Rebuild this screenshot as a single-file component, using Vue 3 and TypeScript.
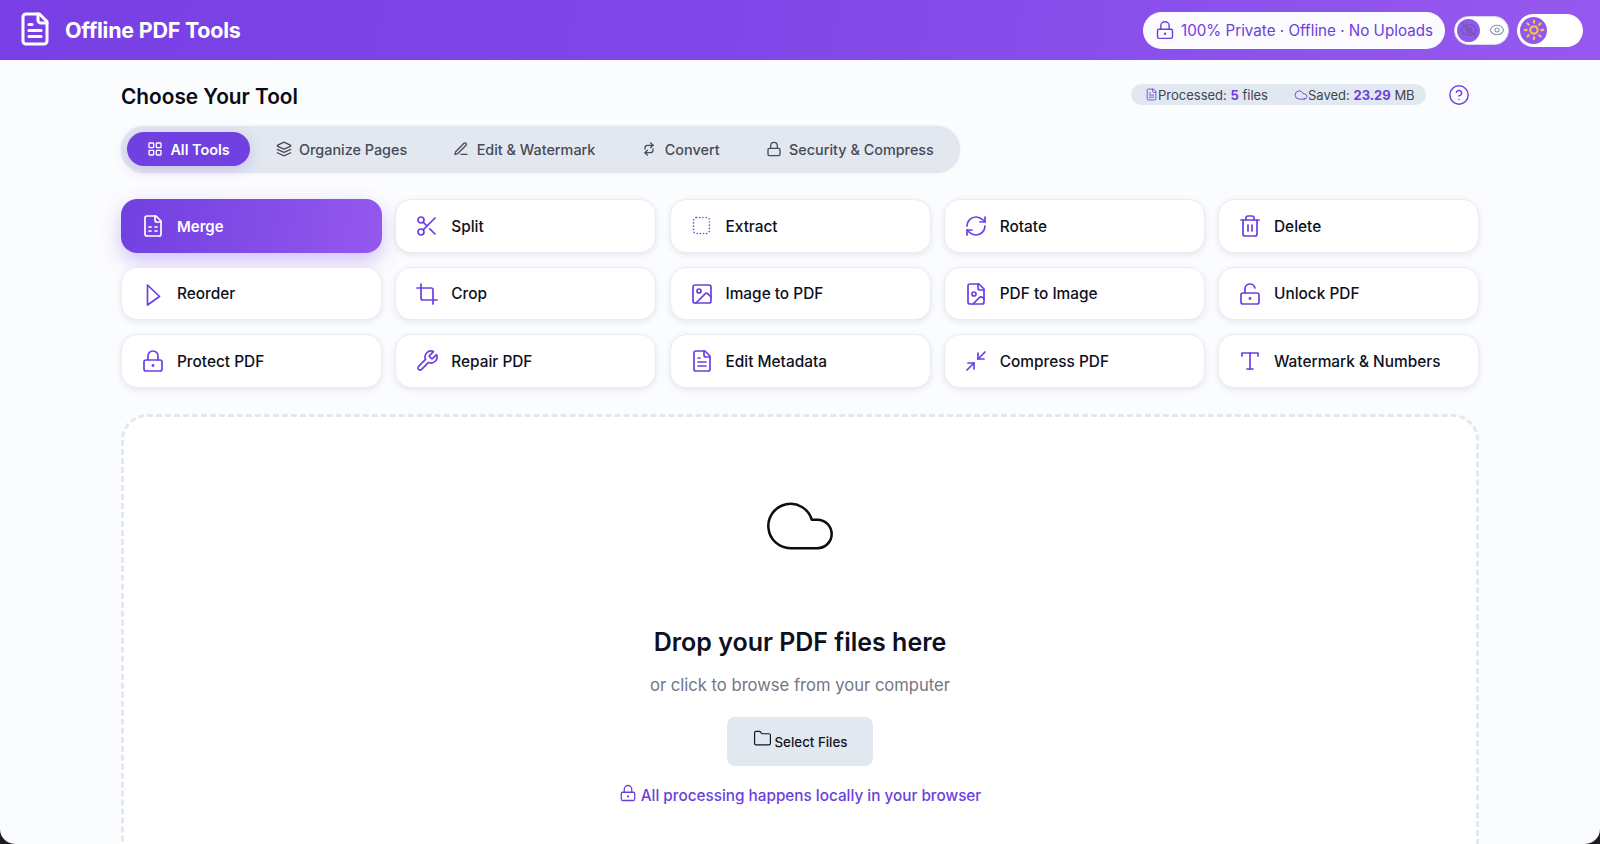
<script setup lang="ts">
import { h } from "vue";

const lockDot =
  '<rect x="3" y="11" width="18" height="11" rx="2"/><path d="M7 11V7a5 5 0 0 1 10 0v4"/><circle cx="12" cy="16.5" r=".6"/>';
const fileBase =
  '<path d="M15 2H6a2 2 0 0 0-2 2v16a2 2 0 0 0 2 2h12a2 2 0 0 0 2-2V7Z"/><path d="M14 2v4a2 2 0 0 0 2 2h4"/>';

const icons: Record<string, string> = {
  fileText: fileBase + '<path d="M10 9H8"/><path d="M16 13H8"/><path d="M16 17H8"/>',
  fileList: fileBase + '<path d="M8 13h2"/><path d="M14 13h2"/><path d="M8 17h2"/><path d="M14 17h2"/>',
  fileImage: fileBase + '<circle cx="10" cy="12" r="2"/><path d="m20 17-1.296-1.296a2.41 2.41 0 0 0-3.408 0L9 22"/>',
  scissors:
    '<circle cx="6" cy="6" r="3"/><circle cx="6" cy="18" r="3"/><path d="M8.12 8.12 12 12"/><path d="M20 4 8.12 15.88"/><path d="M14.8 14.8 20 20"/>',
  dotted: '<rect x="3.5" y="3.5" width="16" height="16" rx="3" stroke-width="1.6" stroke-dasharray="0.01 3.2"/>',
  rotate:
    '<path d="M3 12a9 9 0 0 1 9-9 9.75 9.75 0 0 1 6.74 2.74L21 8"/><path d="M21 3v5h-5"/><path d="M21 12a9 9 0 0 1-9 9 9.75 9.75 0 0 1-6.74-2.74L3 16"/><path d="M8 16H3v5"/>',
  trash:
    '<path d="M3 6h18"/><path d="M19 6v14a2 2 0 0 1-2 2H7a2 2 0 0 1-2-2V6"/><path d="M8 6V4a2 2 0 0 1 2-2h4a2 2 0 0 1 2 2v2"/><path d="M10 11v6"/><path d="M14 11v6"/>',
  reorder: '<path d="M6.5 23V3L18.5 14.5 6.5 23"/>',
  crop: '<path d="M6 2v14a2 2 0 0 0 2 2h14"/><path d="M18 22V8a2 2 0 0 0-2-2H2"/>',
  image:
    '<rect x="3" y="3" width="18" height="18" rx="2"/><circle cx="9" cy="9" r="2"/><path d="m21 15-3.086-3.086a2 2 0 0 0-2.828 0L6 21"/>',
  unlock:
    '<rect x="3" y="11" width="18" height="11" rx="2"/><path d="M7 11V7a5 5 0 0 1 9.9-1"/><circle cx="12" cy="16.5" r=".6"/>',
  lock: lockDot,
  lockPlain: '<rect x="3" y="11" width="18" height="11" rx="2"/><path d="M7 11V7a5 5 0 0 1 10 0v4"/>',
  wrench:
    '<path d="M14.7 6.3a1 1 0 0 0 0 1.4l1.6 1.6a1 1 0 0 0 1.4 0l3.77-3.77a6 6 0 0 1-7.94 7.94l-6.91 6.91a2.12 2.12 0 0 1-3-3l6.91-6.91a6 6 0 0 1 7.94-7.94l-3.76 3.76z"/>',
  compress: '<path d="M4 14h6v6"/><path d="M20 10h-6V4"/><path d="m14 10 7-7"/><path d="m3 21 7-7"/>',
  type: '<path d="M4 7V4h16v3"/><path d="M9 20h6"/><path d="M12 4v16"/>',
  grid:
    '<rect x="3" y="3" width="7" height="7" rx="1"/><rect x="14" y="3" width="7" height="7" rx="1"/><rect x="14" y="14" width="7" height="7" rx="1"/><rect x="3" y="14" width="7" height="7" rx="1"/>',
  layers:
    '<path d="m12.83 2.18a2 2 0 0 0-1.66 0L2.6 6.08a1 1 0 0 0 0 1.83l8.58 3.91a2 2 0 0 0 1.66 0l8.58-3.9a1 1 0 0 0 0-1.83Z"/><path d="m22 17.65-9.17 4.16a2 2 0 0 1-1.66 0L2 17.65"/><path d="m22 12.65-9.17 4.16a2 2 0 0 1-1.66 0L2 12.65"/>',
  pen: '<path d="M12 20h9"/><path d="M16.5 3.5a2.12 2.12 0 0 1 3 3L7 19l-4 1 1-4Z"/>',
  repeat:
    '<path d="m14.5 3 3.5 3.5-3.5 3.5"/><path d="M6 12v-2a3.5 3.5 0 0 1 3.5-3.5H18"/><path d="m9.5 21-3.5-3.5 3.5-3.5"/><path d="M18 12v2a3.5 3.5 0 0 1-3.5 3.5H6"/>',
  cloud: '<path d="M17.5 19H9a7 7 0 1 1 6.71-9h1.79a4.5 4.5 0 1 1 0 9Z"/>',
  folder:
    '<path d="M20 20a2 2 0 0 0 2-2V8a2 2 0 0 0-2-2h-7.9a2 2 0 0 1-1.69-.9L9.6 3.9A2 2 0 0 0 7.93 3H4a2 2 0 0 0-2 2v13a2 2 0 0 0 2 2Z"/>',
  help: '<circle cx="12" cy="12" r="10"/><path d="M9.09 9a3 3 0 0 1 5.83 1c0 2-3 3-3 3"/><path d="M12 17h.01"/>',
  eye: '<path d="M2.062 12.348a1 1 0 0 1 0-.696 10.75 10.75 0 0 1 19.876 0 1 1 0 0 1 0 .696 10.75 10.75 0 0 1-19.876 0"/><circle cx="12" cy="12" r="3"/>',
  eyeOff:
    '<path d="M2.062 12.348a1 1 0 0 1 0-.696 10.75 10.75 0 0 1 19.876 0 1 1 0 0 1 0 .696 10.75 10.75 0 0 1-19.876 0"/><circle cx="12" cy="12" r="3"/><path d="m3 3 18 18"/>',
  sun: '<circle cx="12" cy="12" r="4"/><path d="M12 2v2"/><path d="M12 20v2"/><path d="m4.93 4.93 1.41 1.41"/><path d="m17.66 17.66 1.41 1.41"/><path d="M2 12h2"/><path d="M20 12h2"/><path d="m6.34 17.66-1.41 1.41"/><path d="m19.07 4.93-1.41 1.41"/>',
};

// small wrapper so the template stays readable
const Icon = (props: { name: string; size?: number; sw?: number }) =>
  h("svg", {
    width: props.size ?? 20,
    height: props.size ?? 20,
    viewBox: "0 0 24 24",
    fill: "none",
    stroke: "currentColor",
    "stroke-width": props.sw ?? 2,
    "stroke-linecap": "round",
    "stroke-linejoin": "round",
    innerHTML: icons[props.name],
  });
Icon.props = ["name", "size", "sw"];

const tabs = [
  { label: "All Tools", icon: "grid" },
  { label: "Organize Pages", icon: "layers" },
  { label: "Edit & Watermark", icon: "pen" },
  { label: "Convert", icon: "repeat" },
  { label: "Security & Compress", icon: "lockPlain" },
];

const tools = [
  { label: "Merge", icon: "fileList" },
  { label: "Split", icon: "scissors" },
  { label: "Extract", icon: "dotted" },
  { label: "Rotate", icon: "rotate" },
  { label: "Delete", icon: "trash" },
  { label: "Reorder", icon: "reorder" },
  { label: "Crop", icon: "crop" },
  { label: "Image to PDF", icon: "image" },
  { label: "PDF to Image", icon: "fileImage" },
  { label: "Unlock PDF", icon: "unlock" },
  { label: "Protect PDF", icon: "lock" },
  { label: "Repair PDF", icon: "wrench" },
  { label: "Edit Metadata", icon: "fileText" },
  { label: "Compress PDF", icon: "compress" },
  { label: "Watermark & Numbers", icon: "type" },
];
</script>

<template>
  <div class="app">
    <header class="topbar">
      <div class="brand">
        <Icon name="fileText" :size="36" class="brand-icon" />
        <span class="brand-name">Offline PDF Tools</span>
      </div>
      <div class="top-actions">
        <div class="privacy">
          <Icon name="lock" :size="20" :sw="1.7" />
          <span>100% Private · Offline · No Uploads</span>
        </div>
        <div class="toggle toggle-eye">
          <span class="thumb"><Icon name="eyeOff" :size="18" :sw="1.6" /></span>
          <Icon name="eye" :size="16" :sw="1.6" class="eye-on" />
        </div>
        <div class="toggle toggle-sun">
          <span class="thumb"><Icon name="sun" :size="22" :sw="2.5" /></span>
        </div>
      </div>
    </header>

    <main class="content">
      <div class="title-row">
        <h1>Choose Your Tool</h1>
        <div class="title-side">
          <div class="stats">
            <span class="stat"><Icon name="fileText" :size="13" :sw="1.6" class="stat-icon" />Processed: <b>5</b> files</span>
            <span class="stat"><Icon name="cloud" :size="14" :sw="1.6" class="stat-icon" />Saved: <b>23.29</b> MB</span>
          </div>
          <Icon name="help" :size="22" :sw="1.6" class="help" />
        </div>
      </div>

      <nav class="tabs">
        <div v-for="(tab, i) in tabs" :key="tab.label" :class="['tab', { active: i === 0 }]">
          <Icon :name="tab.icon" :size="16" />
          <span>{{ tab.label }}</span>
        </div>
      </nav>

      <section class="tools">
        <div v-for="(tool, i) in tools" :key="tool.label" :class="['tool', { active: i === 0 }]">
          <Icon :name="tool.icon" :size="24" :sw="1.7" class="tool-icon" />
          <span>{{ tool.label }}</span>
        </div>
      </section>

      <section class="dropzone">
        <Icon name="cloud" :size="76" :sw="0.8" class="cloud" />
        <h2>Drop your PDF files here</h2>
        <p class="hint">or click to browse from your computer</p>
        <button class="select-btn">
          <Icon name="folder" :size="19" :sw="1.5" class="folder" />
          <span>Select Files</span>
        </button>
        <p class="local">
          <Icon name="lock" :size="18" :sw="1.7" class="local-icon" />
          <span>All processing happens locally in your browser</span>
        </p>
      </section>
    </main>
  </div>
</template>

<style>
html,
body {
  margin: 0;
  background: #1d1c22;
}
</style>

<style scoped>
.app {
  width: 1600px;
  height: 844px;
  overflow: hidden;
  background: #fbfcfe;
  border-radius: 0 0 15px 15px;
  font-family: Inter, "Liberation Sans", sans-serif;
  color: #0f1220;
}

.topbar {
  height: 60px;
  display: flex;
  align-items: center;
  justify-content: space-between;
  padding: 0 17px;
  box-sizing: border-box;
  background: linear-gradient(100deg, #7840e4 0%, #7f47e8 45%, #9659ef 100%);
}

.brand {
  display: flex;
  align-items: center;
  gap: 12px;
  color: #fff;
}

.brand-icon {
  margin-top: -2px;
}

.brand-name {
  font-size: 21.5px;
  font-weight: 700;
  letter-spacing: -0.25px;
}

.top-actions {
  display: flex;
  align-items: center;
}

.privacy {
  width: 302px;
  height: 37px;
  box-sizing: border-box;
  display: flex;
  align-items: center;
  gap: 6px;
  padding-left: 12px;
  border-radius: 19px;
  background: #fbfaff;
  color: #6c3fdd;
  font-size: 15.2px;
}

.toggle {
  display: flex;
  align-items: center;
  box-sizing: border-box;
  background: #fff;
  border-radius: 20px;
}

.toggle .thumb {
  display: flex;
  align-items: center;
  justify-content: center;
  flex-shrink: 0;
  border-radius: 50%;
  background: #9158ec;
}

.toggle-eye {
  width: 55px;
  height: 29px;
  margin-left: 9px;
  padding: 3px 2px;
  border: 1px solid #d9d4ea;
}

.toggle-eye .thumb {
  width: 23px;
  height: 23px;
  color: #6a5aa8;
}

.eye-on {
  margin-left: 9px;
  color: #8b95a5;
}

.toggle-sun {
  width: 66px;
  height: 33px;
  margin-left: 8px;
  padding: 3px;
}

.toggle-sun .thumb {
  width: 27px;
  height: 27px;
  color: #f3bd52;
}

.content {
  padding: 0 121px;
}

.title-row {
  height: 65.5px;
  display: flex;
  align-items: center;
  justify-content: space-between;
  padding-top: 6px;
  box-sizing: border-box;
}

h1 {
  margin: 2px 0 0;
  font-size: 20.8px;
  font-weight: 600;
  color: #090b14;
}

.title-side {
  display: flex;
  align-items: center;
  margin: -2px 9px 0 0;
}

.stats {
  width: 295px;
  height: 21px;
  box-sizing: border-box;
  display: flex;
  align-items: center;
  gap: 26px;
  padding-left: 14px;
  border-radius: 11px;
  background: #e2e8f0;
  font-size: 13px;
  color: #3f4450;
}

.stat {
  display: flex;
  align-items: center;
  white-space: pre;
}

.stat b {
  color: #6c3fdd;
  font-weight: 700;
}

.stat-icon {
  color: #6c3fdd;
}

.help {
  margin-left: 22px;
  color: #7444e2;
}

.tabs {
  width: fit-content;
  height: 47px;
  box-sizing: border-box;
  display: flex;
  align-items: center;
  gap: 6px;
  padding: 0 6px;
  border-radius: 24px;
  background: #e2e7f0;
  box-shadow: 0 0 2px rgba(60, 70, 110, 0.15);
}

.tab {
  height: 34px;
  box-sizing: border-box;
  display: flex;
  align-items: center;
  gap: 7.4px;
  padding: 0 20px;
  border-radius: 17px;
  font-size: 14.4px;
  font-weight: 500;
  color: #474b57;
}

.tab.active {
  background: #7040e0;
  color: #fff;
  font-weight: 600;
  box-shadow: 0 4px 14px rgba(112, 64, 224, 0.22);
}

.tools {
  display: grid;
  grid-template-columns: repeat(5, 1fr);
  grid-auto-rows: 53.5px;
  gap: 14px 13.25px;
  margin-top: 26.5px;
}

.tool {
  display: flex;
  align-items: center;
  gap: 12px;
  padding: 1px 0 0 19px;
  box-sizing: border-box;
  border: 1px solid #e9ecf3;
  border-radius: 16px;
  background: #fff;
  box-shadow: 0 2px 6px rgba(40, 50, 90, 0.1);
  font-size: 15.4px;
  font-weight: 500;
  color: #0e111c;
}

.tool-icon {
  color: #6c3fe3;
}

.tool.active {
  border-color: transparent;
  background: linear-gradient(100deg, #7040e0 0%, #9558ee 100%) border-box;
  color: #fff;
  font-size: 15px;
  font-weight: 600;
  box-shadow: 0 8px 20px rgba(124, 70, 230, 0.32);
}

.tool.active .tool-icon {
  color: #fff;
}

.dropzone {
  height: 520px;
  margin-top: 26px;
  box-sizing: border-box;
  display: flex;
  flex-direction: column;
  align-items: center;
  padding-top: 71px;
  border: 3px dashed #e2e8f0;
  border-radius: 26px;
  background: #fff;
}

.cloud {
  color: #0b0d16;
}

h2 {
  margin: 58px 0 0;
  font-size: 25px;
  font-weight: 600;
  line-height: 40px;
  color: #0d1020;
}

.hint {
  margin: 11px 0 0;
  font-size: 16.6px;
  line-height: 24px;
  color: #737782;
}

.select-btn {
  width: 146px;
  height: 49px;
  margin-top: 20px;
  display: flex;
  align-items: center;
  justify-content: center;
  gap: 3px;
  border: none;
  border-radius: 8px;
  background: #e2e8f0;
  font-family: inherit;
  font-size: 13.33px;
  font-weight: 500;
  color: #13151f;
}

.folder {
  margin-top: -6px;
}

.select-btn span {
  margin-top: 2px;
}

.local {
  display: flex;
  align-items: center;
  gap: 4px;
  margin: 18px 0 0;
  font-size: 15.3px;
  font-weight: 500;
  line-height: 24px;
  color: #6c3fdd;
}

.local-icon {
  margin-top: -5px;
}
</style>
